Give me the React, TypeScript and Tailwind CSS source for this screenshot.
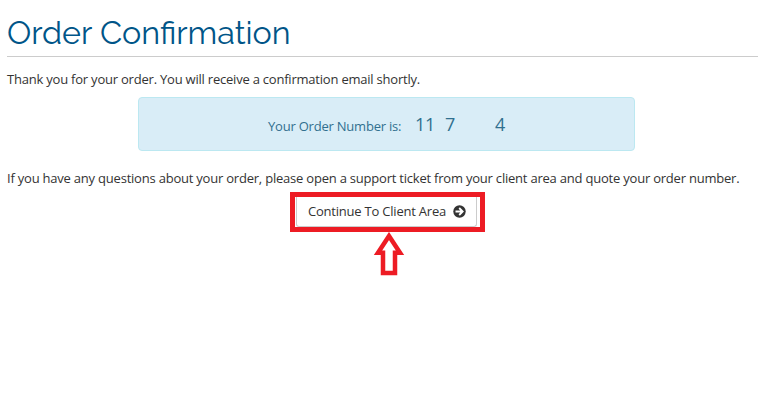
export default function App() {
  return (
    <main className="h-[401px] w-[758px] overflow-hidden bg-white pl-[7px] font-['Open_Sans',sans-serif] text-[13px] leading-5 tracking-[-0.215px] text-[#333]">
      <h1 className="h-[57px] whitespace-nowrap border-b border-[#ccc] pt-[13px] font-['Raleway','Lato',sans-serif] text-[32.3px] leading-10 font-normal tracking-normal text-[#058]">
        Order Confirmation
      </h1>
      <p className="mt-3 whitespace-nowrap">Thank you for your order. You will receive a confirmation email shortly.</p>
      <div className="mt-2 ml-[131px] flex h-[54px] w-[497px] items-baseline rounded border border-[#bce8f1] bg-[#d9edf7] pt-[14px] pl-[129px] text-[#31708f]">
        <span className="w-[147px] whitespace-nowrap">Your Order Number is:</span>
        <span className="w-[30px] text-[18px] leading-6">11</span>
        <span className="w-[50px] text-[18px] leading-6">7</span>
        <span className="text-[18px] leading-6">4</span>
      </div>
      <p className="mt-[17px] whitespace-nowrap">
        If you have any questions about your order, please open a support ticket from your client area and quote your order number.
      </p>
      <div className="mt-1 ml-[283px] flex h-10 w-[195px] border-[5px] border-[#ed1c24] pl-px">
        <button className="flex h-[30px] w-[181px] items-center gap-[7px] rounded-b-[3px] border border-t-0 border-[#ccc] pb-px pl-[11px] whitespace-nowrap">
          Continue To Client Area
          <svg className="size-[13px] shrink-0" viewBox="0 0 13 13" fill="none">
            <circle cx="6.5" cy="6.5" r="6.2" fill="#333" />
            <path d="M2.5 6.5 H9 M6.2 3 L9.7 6.5 L6.2 10" stroke="white" strokeWidth="1.8" />
          </svg>
        </button>
      </div>
      <svg className="ml-[366px] block" width="32" height="44" viewBox="0 0 32 44" fill="none" stroke="#ed1c24" strokeWidth="4.5">
        <path d="M16 4 L27 20.8 H22 V41 H10 V20.8 H5 Z" />
      </svg>
    </main>
  );
}
